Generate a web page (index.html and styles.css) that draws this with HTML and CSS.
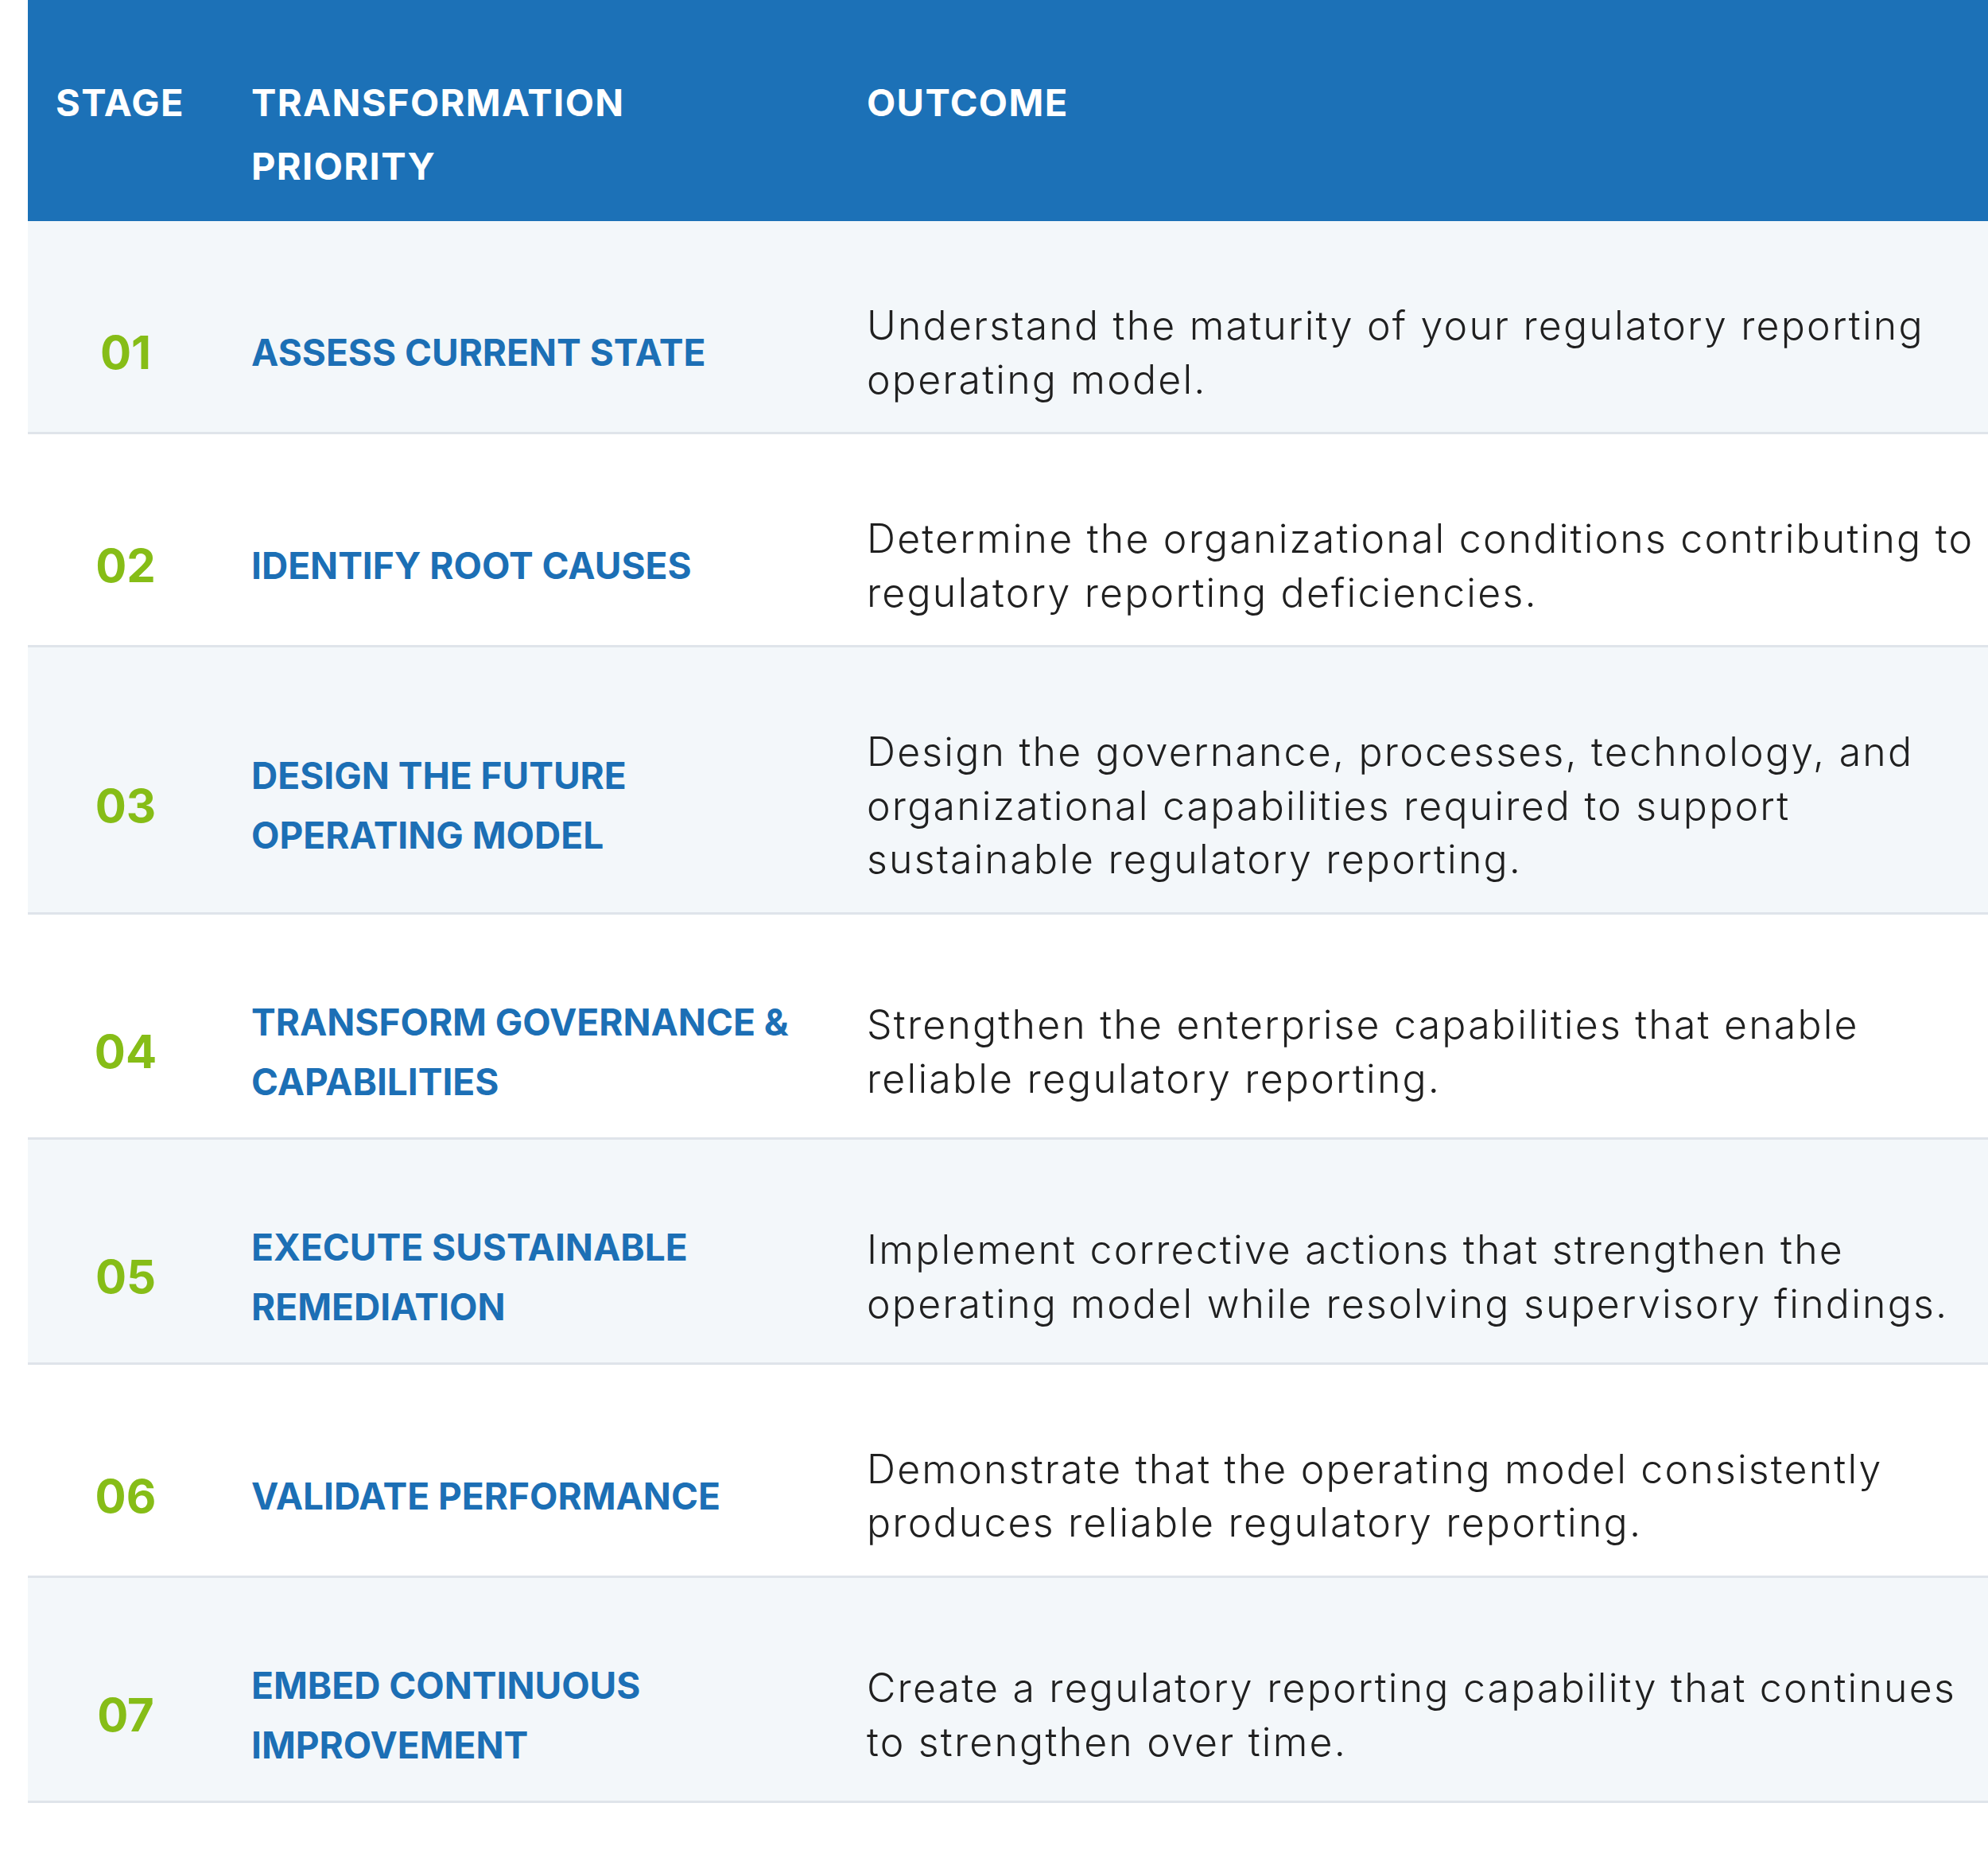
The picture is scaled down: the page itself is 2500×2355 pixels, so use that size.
FILE: index.html
```html
<!DOCTYPE html>
<html lang="en">
<head>
<meta charset="utf-8">
<title>Transformation stages</title>
<link rel="stylesheet" href="styles.css">
</head>
<body>
<div class="page">
  <table class="stages">
    <colgroup>
      <col class="col-stage">
      <col class="col-priority">
      <col class="col-outcome">
    </colgroup>
    <thead>
      <tr>
        <th>STAGE</th>
        <th>TRANSFORMATION<br>PRIORITY</th>
        <th>OUTCOME</th>
      </tr>
    </thead>
    <tbody>
      <tr>
        <td class="num">01</td>
        <td class="priority">ASSESS CURRENT STATE</td>
        <td class="outcome">Understand the maturity of your regulatory reporting<br>operating model.</td>
      </tr>
      <tr>
        <td class="num">02</td>
        <td class="priority">IDENTIFY ROOT CAUSES</td>
        <td class="outcome">Determine the organizational conditions contributing to<br>regulatory reporting deficiencies.</td>
      </tr>
      <tr>
        <td class="num">03</td>
        <td class="priority">DESIGN THE FUTURE<br>OPERATING MODEL</td>
        <td class="outcome">Design the governance, processes, technology, and<br>organizational capabilities required to support<br>sustainable regulatory reporting.</td>
      </tr>
      <tr>
        <td class="num">04</td>
        <td class="priority">TRANSFORM GOVERNANCE &amp;<br>CAPABILITIES</td>
        <td class="outcome">Strengthen the enterprise capabilities that enable<br>reliable regulatory reporting.</td>
      </tr>
      <tr>
        <td class="num">05</td>
        <td class="priority">EXECUTE SUSTAINABLE<br>REMEDIATION</td>
        <td class="outcome">Implement corrective actions that strengthen the<br>operating model while resolving supervisory findings.</td>
      </tr>
      <tr>
        <td class="num">06</td>
        <td class="priority">VALIDATE PERFORMANCE</td>
        <td class="outcome">Demonstrate that the operating model consistently<br>produces reliable regulatory reporting.</td>
      </tr>
      <tr>
        <td class="num">07</td>
        <td class="priority">EMBED CONTINUOUS<br>IMPROVEMENT</td>
        <td class="outcome">Create a regulatory reporting capability that continues<br>to strengthen over time.</td>
      </tr>
    </tbody>
  </table>
</div>
</body>
</html>
```

FILE: styles.css
```css
html, body {
  margin: 0;
  padding: 0;
  background: #ffffff;
  overflow: hidden;
}

.page {
  padding-left: 35px;
  font-family: "Inter", "Liberation Sans", sans-serif;
}

.stages {
  width: 2465px;
  border-collapse: collapse;
  table-layout: fixed;
}

.col-stage { width: 246px; }
.col-priority { width: 774px; }
.col-outcome { width: auto; }

.stages th {
  background: #1c71b7;
  color: #ffffff;
  font-weight: 700;
  font-size: 47px;
  letter-spacing: 1.4px;
  line-height: 80px;
  text-align: left;
  vertical-align: top;
  padding: 89px 35px 29px 35px;
  white-space: nowrap;
}

.stages tbody tr {
  border-bottom: 3px solid #dfe4ea;
}

.stages tbody tr:nth-child(odd) {
  background: #f3f7fa;
}

.stages tbody tr:nth-child(even) {
  background: #ffffff;
}

.stages td {
  vertical-align: middle;
  padding: 98px 35px 32px 35px;
  white-space: nowrap;
}

.num {
  text-align: center;
  color: #86bd17;
  font-weight: 700;
  font-size: 58px;
  line-height: 75px;
}

.priority {
  color: #1c6fb5;
  font-weight: 700;
  font-size: 46px;
  line-height: 75px;
}

.outcome {
  color: #202020;
  font-weight: 300;
  font-size: 50px;
  letter-spacing: 2.2px;
  line-height: 67.5px;
}
```
